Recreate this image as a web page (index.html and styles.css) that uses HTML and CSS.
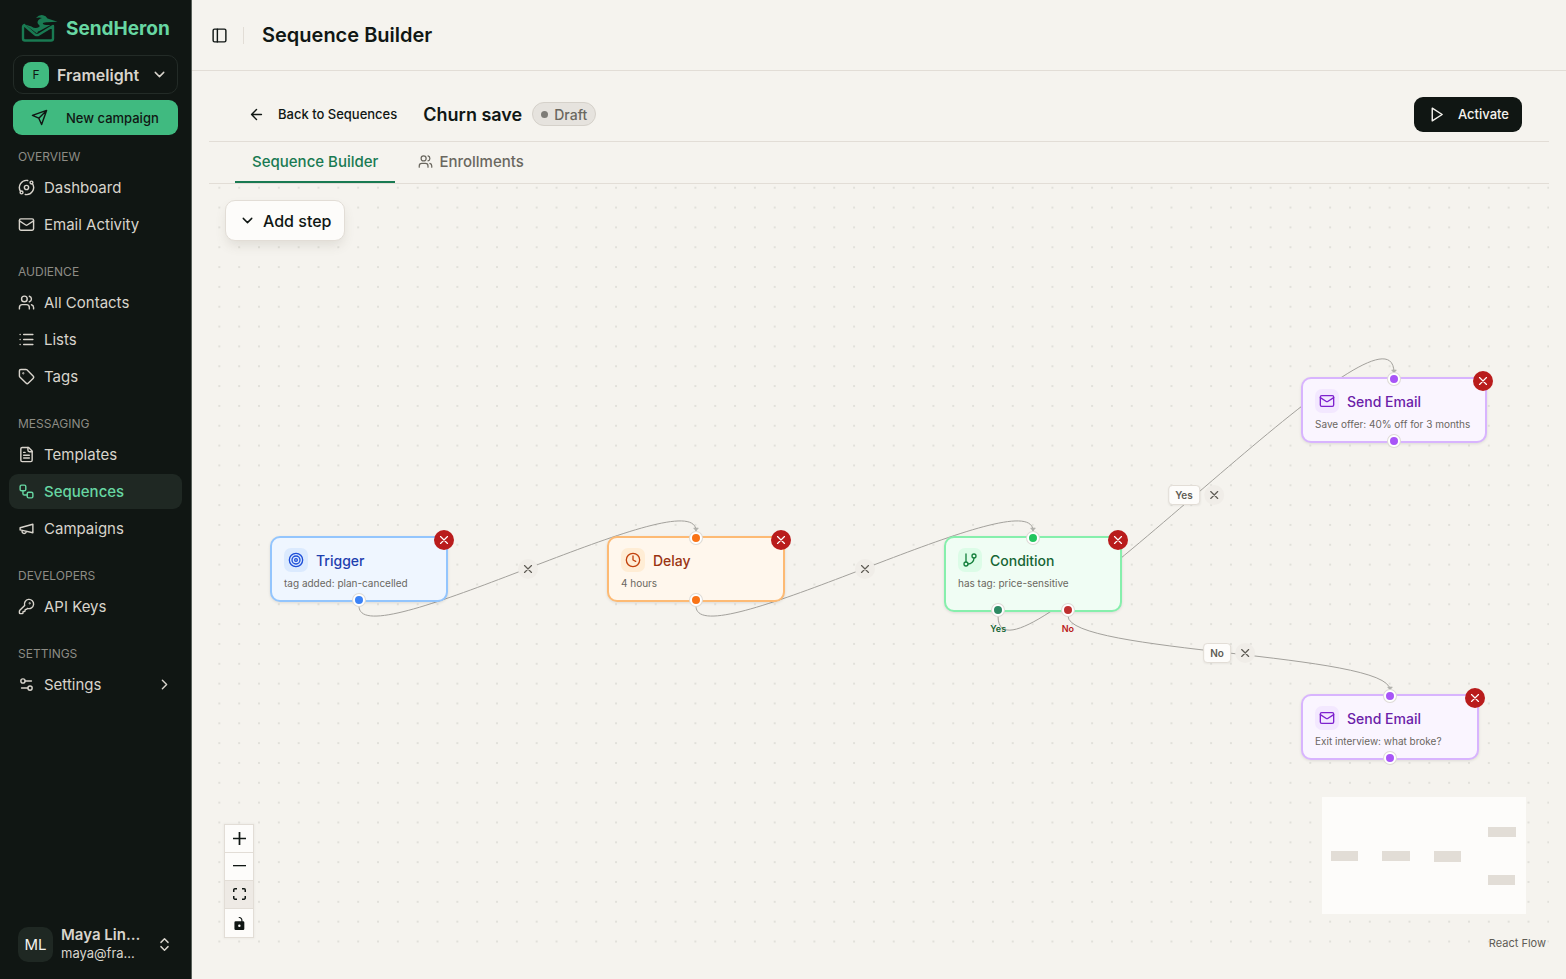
FILE: index.html
```html
<!DOCTYPE html>
<html lang="en">
<head>
<meta charset="utf-8">
<title>Sequence Builder - SendHeron</title>
<link rel="stylesheet" href="styles.css">
</head>
<body>
<svg class="sprite" aria-hidden="true">
  <symbol id="mail" viewBox="0 0 24 24"><rect x="2" y="4" width="20" height="16" rx="2"/><path d="m22 7-8.97 5.7a1.94 1.94 0 0 1-2.06 0L2 7"/></symbol>
  <symbol id="users" viewBox="0 0 24 24"><path d="M16 21v-2a4 4 0 0 0-4-4H6a4 4 0 0 0-4 4v2"/><circle cx="9" cy="7" r="4"/><path d="M22 21v-2a4 4 0 0 0-3-3.87M16 3.13a4 4 0 0 1 0 7.75"/></symbol>
  <symbol id="down" viewBox="0 0 24 24"><path d="m6 9 6 6 6-6"/></symbol>
  <symbol id="x" viewBox="0 0 24 24"><path d="M18 6 6 18M6 6l12 12"/></symbol>
</svg>
<div class="app">
  <aside class="sidebar">
    <a class="brand" href="#">
      <svg class="brand-mark" viewBox="0 0 38 28"><path d="M4 11Q2 11 2 13V24.500Q2 26.500 4 26.500H30Q32 26.500 32 24.500V12L18 20.500Q16 21.800 14 20.500L3.500 11.500" fill="none" stroke="#197a52" stroke-width="2.400" stroke-linejoin="round"/><path d="M4 10.500 10.500 12.500 17 17.500 16 19.500Z" fill="#197a52"/><path d="M15 4Q18 .5 22 1.200Q25 1.700 26.500 4.500L36.500 7.800L26 8.200Q21.500 8 21.800 9.800Q22.500 11.300 29.500 11L23 14.500Q19 17 15.500 18L10.500 13Q15 15 18 13Q19.500 12 17.500 10.500Q15.500 8.500 17.500 6Q19 4.500 21 4Q18 3 15 4Z" fill="#197a52"/></svg>
      <span>SendHeron</span>
    </a>
    <button class="org"><span class="org-badge">F</span><span class="org-name">Framelight</span><svg class="icon"><use href="#down"/></svg></button>
    <button class="new-campaign"><svg class="icon" viewBox="0 0 24 24"><path d="m22 2-7 20-4-9-9-4ZM22 2 11 13"/></svg><span>New campaign</span></button>
    <nav class="nav">
      <section class="group"><h2>OVERVIEW</h2>
        <a href="#"><svg class="icon" viewBox="0 0 24 24"><path d="M20.341 6.484A10 10 0 0 1 10.266 21.850M3.659 17.516A10 10 0 0 1 13.740 2.152"/><circle cx="12" cy="12" r="3"/><circle cx="19" cy="5" r="2"/><circle cx="5" cy="19" r="2"/></svg>Dashboard</a>
        <a href="#"><svg class="icon"><use href="#mail"/></svg>Email Activity</a>
      </section>
      <section class="group"><h2>AUDIENCE</h2>
        <a href="#"><svg class="icon"><use href="#users"/></svg>All Contacts</a>
        <a href="#"><svg class="icon" viewBox="0 0 24 24"><path d="M3 5h.01M3 12h.01M3 19h.01M8 5h13M8 12h13M8 19h13"/></svg>Lists</a>
        <a href="#"><svg class="icon" viewBox="0 0 24 24"><path d="M12.586 2.586A2 2 0 0 0 11.172 2H4a2 2 0 0 0-2 2v7.172a2 2 0 0 0 .586 1.414l8.704 8.704a2.426 2.426 0 0 0 3.420 0l6.580-6.580a2.426 2.426 0 0 0 0-3.420z"/><circle cx="7.500" cy="7.500" r=".5"/></svg>Tags</a>
      </section>
      <section class="group"><h2>MESSAGING</h2>
        <a href="#"><svg class="icon" viewBox="0 0 24 24"><path d="M15 2H6a2 2 0 0 0-2 2v16a2 2 0 0 0 2 2h12a2 2 0 0 0 2-2V7Z"/><path d="M14 2v4a2 2 0 0 0 2 2h4M10 9H8M16 13H8M16 17H8"/></svg>Templates</a>
        <a href="#" class="active" aria-current="page"><svg class="icon" viewBox="0 0 24 24"><rect x="3" y="3" width="8" height="8" rx="2"/><path d="M7 11v4a2 2 0 0 0 2 2h4"/><rect x="13" y="13" width="8" height="8" rx="2"/></svg>Sequences</a>
        <a href="#"><svg class="icon" viewBox="0 0 24 24"><path d="m3 11 18-5v12L3 14v-3zM11.600 16.800a3 3 0 1 1-5.800-1.600"/></svg>Campaigns</a>
      </section>
      <section class="group"><h2>DEVELOPERS</h2>
        <a href="#"><svg class="icon" viewBox="0 0 24 24"><path d="M2.586 17.414A2 2 0 0 0 2 18.828V21a1 1 0 0 0 1 1h3a1 1 0 0 0 1-1v-1a1 1 0 0 1 1-1h1a1 1 0 0 0 1-1v-1a1 1 0 0 1 1-1h.172a2 2 0 0 0 1.414-.586l.814-.814a6.500 6.500 0 1 0-4-4z"/><circle cx="16.500" cy="7.500" r=".5"/></svg>API Keys</a>
      </section>
      <section class="group"><h2>SETTINGS</h2>
        <a href="#"><svg class="icon" viewBox="0 0 24 24"><path d="M14 17H5M19 7h-9"/><circle cx="17" cy="17" r="3"/><circle cx="7" cy="7" r="3"/></svg>Settings<svg class="icon trailing" viewBox="0 0 24 24"><path d="m9 18 6-6-6-6"/></svg></a>
      </section>
    </nav>
    <button class="user"><span class="avatar">ML</span><span class="user-text"><strong>Maya Lin…</strong><span>maya@fra…</span></span><svg class="icon" viewBox="0 0 24 24"><path d="m7 15 5 5 5-5M7 9l5-5 5 5"/></svg></button>
  </aside>

  <main class="main">
    <header class="topbar">
      <button class="bare" aria-label="Toggle sidebar"><svg class="icon" viewBox="0 0 24 24"><rect x="3" y="3" width="18" height="18" rx="2"/><path d="M9 3v18"/></svg></button>
      <span class="divider"></span>
      <h1>Sequence Builder</h1>
    </header>
    <div class="content">
      <div class="builder-bar">
        <a class="back" href="#"><svg class="icon" viewBox="0 0 24 24"><path d="m12 19-7-7 7-7M19 12H5"/></svg>Back to Sequences</a>
        <h2>Churn save</h2>
        <span class="badge">Draft</span>
        <button class="activate"><svg class="icon" viewBox="0 0 24 24"><path d="m6 3 14 9-14 9Z"/></svg>Activate</button>
      </div>
      <div class="tabs" role="tablist">
        <button class="tab selected" role="tab" aria-selected="true">Sequence Builder</button>
        <button class="tab" role="tab" aria-selected="false"><svg class="icon"><use href="#users"/></svg>Enrollments</button>
      </div>
      <div class="canvas">
        <svg class="edges">
          <defs>
            <pattern id="dots" width="20" height="20" patternUnits="userSpaceOnUse" patternTransform="translate(0.400 -6.200) scale(.9918)"><circle cx="10" cy="10" r=".8" fill="#c9c7c1"/></pattern>
            <marker id="arrow" markerWidth="12" markerHeight="12" viewBox="-10 -10 20 20" orient="auto-start-reverse" markerUnits="strokeWidth" refX="0" refY="0"><path d="M-5-4 0 0-5 4Z" fill="#b1b1ad" stroke="#b1b1ad" stroke-linejoin="round"/></marker>
          </defs>
          <rect width="100%" height="100%" fill="url(#dots)"/>
          <g class="lines">
            <path d="M150 422C150 476 487 293 487 347"/>
            <path d="M487 422C487 476 824 293 824 347"/>
            <path d="M789 432C789 529 1185 92 1185 189"/>
            <path d="M859 432C859 469 1181 469 1181 506"/>
          </g>
        </svg>

        <div class="edge-label edge-a"><button aria-label="Remove connection"><svg class="icon"><use href="#x"/></svg></button></div>
        <div class="edge-label edge-b"><button aria-label="Remove connection"><svg class="icon"><use href="#x"/></svg></button></div>
        <div class="edge-label edge-c"><span>Yes</span><button aria-label="Remove connection"><svg class="icon"><use href="#x"/></svg></button></div>
        <div class="edge-label edge-d"><span>No</span><button aria-label="Remove connection"><svg class="icon"><use href="#x"/></svg></button></div>

        <article class="node trigger">
          <div class="node-head"><span class="node-icon"><svg class="icon" viewBox="0 0 24 24"><circle cx="12" cy="12" r="10"/><circle cx="12" cy="12" r="6"/><circle cx="12" cy="12" r="2"/></svg></span><h3>Trigger</h3></div>
          <p>tag added: plan-cancelled</p>
          <button class="remove" aria-label="Delete step"><svg class="icon"><use href="#x"/></svg></button>
          <i class="handle bottom"></i>
        </article>
        <article class="node delay">
          <div class="node-head"><span class="node-icon"><svg class="icon" viewBox="0 0 24 24"><circle cx="12" cy="12" r="10"/><path d="M12 6v6l4 2"/></svg></span><h3>Delay</h3></div>
          <p>4 hours</p>
          <button class="remove" aria-label="Delete step"><svg class="icon"><use href="#x"/></svg></button>
          <i class="handle top"></i><i class="handle bottom"></i>
        </article>
        <article class="node condition">
          <div class="node-head"><span class="node-icon"><svg class="icon" viewBox="0 0 24 24"><path d="M6 3v12"/><circle cx="18" cy="6" r="3"/><circle cx="6" cy="18" r="3"/><path d="M18 9a9 9 0 0 1-9 9"/></svg></span><h3>Condition</h3></div>
          <p>has tag: price-sensitive</p>
          <button class="remove" aria-label="Delete step"><svg class="icon"><use href="#x"/></svg></button>
          <i class="handle top"></i><i class="handle bottom yes"></i><i class="handle bottom no"></i>
          <span class="port yes">Yes</span><span class="port no">No</span>
        </article>
        <article class="node email offer">
          <div class="node-head"><span class="node-icon"><svg class="icon"><use href="#mail"/></svg></span><h3>Send Email</h3></div>
          <p>Save offer: 40% off for 3 months</p>
          <button class="remove" aria-label="Delete step"><svg class="icon"><use href="#x"/></svg></button>
          <i class="handle top"></i><i class="handle bottom"></i>
        </article>
        <article class="node email exit">
          <div class="node-head"><span class="node-icon"><svg class="icon"><use href="#mail"/></svg></span><h3>Send Email</h3></div>
          <p>Exit interview: what broke?</p>
          <button class="remove" aria-label="Delete step"><svg class="icon"><use href="#x"/></svg></button>
          <i class="handle top"></i><i class="handle bottom"></i>
        </article>

        <button class="add-step"><svg class="icon"><use href="#down"/></svg>Add step</button>
        <div class="controls">
          <button aria-label="Zoom in"><svg viewBox="0 0 32 32"><path d="M32 18.133H18.133V32h-4.266V18.133H0v-4.266h13.867V0h4.266v13.867H32z"/></svg></button>
          <button aria-label="Zoom out"><svg viewBox="0 0 32 5"><path d="M0 0h32v3.200H0z"/></svg></button>
          <button class="pressed" aria-label="Fit view"><svg viewBox="0 0 32 30"><path d="M3.692 4.630c0-.53.4-.938.939-.938h5.215V0H4.708C2.130 0 0 2.054 0 4.630v5.216h3.692V4.631zM27.354 0h-5.200v3.692h5.170c.53 0 .984.4.984.939v5.215H32V4.631A4.624 4.624 0 0 0 27.354 0zm.954 24.830c0 .532-.4.940-.939.940h-5.215v3.768h5.215c2.577 0 4.631-2.130 4.631-4.707v-5.139h-3.692v5.139zm-23.677.940a.919.919 0 0 1-.939-.940v-5.138H0v5.139c0 2.577 2.130 4.707 4.708 4.707h5.138V25.770H4.631z"/></svg></button>
          <button aria-label="Toggle interactivity"><svg viewBox="0 0 25 32"><path d="M21.333 10.667H19.810V7.619C19.810 3.429 16.380 0 12.190 0c-4.114 1.828-1.370 2.133.305 2.438 1.676.305 4.420 2.590 4.420 5.181v3.048H3.047A3.056 3.056 0 0 0 0 13.714v15.238A3.056 3.056 0 0 0 3.048 32h18.285a3.056 3.056 0 0 0 3.048-3.048V13.714a3.056 3.056 0 0 0-3.048-3.047zM12.190 24.533a3.056 3.056 0 0 1-3.047-3.047 3.056 3.056 0 0 1 3.047-3.048 3.056 3.056 0 0 1 3.048 3.048 3.056 3.056 0 0 1-3.048 3.047z"/></svg></button>
        </div>
        <svg class="minimap" viewBox="0 0 204 117"><g fill="#e2ddd6"><rect x="9" y="54" width="27" height="10"/><rect x="60" y="54" width="28" height="10"/><rect x="112" y="54" width="27" height="11"/><rect x="166" y="30" width="28" height="10"/><rect x="166" y="78" width="27" height="10"/></g></svg>
        <a class="attribution" href="#">React Flow</a>
      </div>
    </div>
  </main>
</div>
</body>
</html>
```
FILE: styles.css
```css
* { box-sizing: border-box; }
body { margin: 0; font-family: Inter, "Liberation Sans", sans-serif; font-size: 15px; color: #101714; background: #f5f3ee; }
button { font: inherit; color: inherit; border: 0; background: none; padding: 0; cursor: pointer; }
a { color: inherit; text-decoration: none; }
h1, h2, h3, p { margin: 0; }
.sprite { display: none; }
.icon { width: 17px; height: 17px; flex: none; fill: none; stroke: currentColor; stroke-width: 2; stroke-linecap: round; stroke-linejoin: round; }
.app { display: flex; min-height: 100vh; }

.sidebar { width: 192px; flex: none; display: flex; flex-direction: column; padding: 13px 9px 8px; background: #101613; color: #d8d4cc; border-right: 1px solid #59605a; }
.brand { display: flex; align-items: center; gap: 7px; height: 30px; padding-left: 12px; font-size: 19px; font-weight: 700; color: #67d6a2; }
.brand-mark { width: 38px; height: 28px; }
.org { display: flex; align-items: center; gap: 8px; height: 39px; margin: 12px 4px 0; padding: 0 9px; border: 1px solid #232b27; border-radius: 10px; font-size: 16px; font-weight: 600; text-align: left; }
.org-badge { width: 26px; height: 26px; display: grid; place-items: center; border-radius: 8px; background: #40ba80; color: #101613; font-size: 12px; font-weight: 400; }
.org-name { flex: 1; }
.new-campaign { display: flex; align-items: center; height: 35px; margin: 6px 4px 9px; padding: 0 18px; gap: 18px; border-radius: 9px; background: #40ba80; color: #101613; font-size: 13px; font-weight: 500; }
.nav { display: flex; flex-direction: column; gap: 17px; }
.group { display: flex; flex-direction: column; gap: 2px; }
.group h2 { height: 24px; padding: 0 9px; line-height: 26px; font-size: 12px; font-weight: 400; color: #8d8c85; }
.group a { display: flex; align-items: center; gap: 9px; height: 35px; padding: 0 9px; border-radius: 9px; }
.group .active { background: #1f2823; color: #67d6a2; font-weight: 500; }
.trailing { margin-left: auto; }
.user { display: flex; align-items: center; gap: 8px; margin-top: auto; padding: 9px; text-align: left; }
.avatar { width: 35px; height: 35px; display: grid; place-items: center; border-radius: 10px; background: #1f2823; color: #f5f3ee; }
.user-text { flex: 1; display: flex; flex-direction: column; font-size: 13px; line-height: 18px; }
.user-text strong { font-size: 15px; font-weight: 600; }

.main { flex: 1; min-width: 0; display: flex; flex-direction: column; }
.topbar { display: flex; align-items: center; height: 71px; padding: 0 19px; border-bottom: 1px solid #e2ddd6; }
.bare { display: flex; }
.divider { width: 1px; height: 17px; margin: 0 18px 0 15px; background: #e2ddd6; }
.topbar h1 { font-size: 20px; font-weight: 600; }
.content { flex: 1; display: flex; flex-direction: column; padding: 26px 17px; }
.builder-bar { display: flex; align-items: center; height: 45px; padding: 0 27px 10px 39px; border-bottom: 1px solid #e2ddd6; }
.back { display: flex; align-items: center; gap: 13px; font-size: 13px; font-weight: 500; }
.builder-bar h2 { margin: 0 10px 0 26px; font-size: 18px; font-weight: 600; }
.badge { display: flex; align-items: center; gap: 6px; height: 24px; padding: 0 8px; border: 1px solid #d5d1ca; border-radius: 12px; background: #e6e3de; color: #6a675f; font-size: 14px; font-weight: 500; }
.badge::before { content: ""; width: 7px; height: 7px; border-radius: 50%; background: #7e7c77; }
.activate { display: flex; align-items: center; gap: 13px; height: 35px; margin-left: auto; padding: 0 13px 0 14px; border-radius: 9px; background: #101613; color: #f5f3ee; font-size: 13px; font-weight: 500; }
.tabs { display: flex; gap: 6px; height: 42px; padding-left: 26px; border-bottom: 1px solid #e2ddd6; }
.tab { display: flex; align-items: center; gap: 6px; padding: 0 17px; font-weight: 500; color: #6a675f; border-bottom: 2px solid transparent; }
.tab .icon { width: 15px; height: 15px; }
.tab.selected { color: #197a52; border-color: #197a52; }

.canvas { position: relative; flex: 1; overflow: hidden; }
.edges { position: absolute; inset: 0; width: 100%; height: 100%; }
.lines path { fill: none; stroke: #a3a19c; stroke-width: 1; marker-end: url(#arrow); }
.edge-label { position: absolute; display: flex; align-items: center; gap: 4px; transform: translate(-50%, -50%); }
.edge-label span { height: 20px; padding: 0 6px; border: 1px solid #e2ddd6; border-radius: 4px; background: #fdfcfa; color: #5f5c55; font-size: 10px; font-weight: 600; line-height: 18px; box-shadow: 0 1px 2px #0000000d; }
.edge-label button { width: 20px; height: 20px; display: grid; place-items: center; border-radius: 50%; background: #f0ede8; color: #5f5c55; }
.edge-label .icon { width: 14px; height: 14px; }
.edge-a { left: 319px; top: 385px; }
.edge-b { left: 656px; top: 385px; }
.edge-c { left: 987px; top: 311px; }
.edge-d { left: 1020px; top: 469px; }

.node { position: absolute; min-width: 178px; height: 66px; padding: 10px 12px; border: 2px solid; border-radius: 10px; box-shadow: 0 1px 3px #0000001a; white-space: nowrap; }
.node-head { display: flex; align-items: center; gap: 8px; }
.node-icon { width: 24px; height: 24px; display: grid; place-items: center; border-radius: 7px; }
.node-icon .icon { width: 16px; height: 16px; }
.node h3 { font-size: 14px; font-weight: 500; }
.node p { margin-top: 4px; font-size: 10px; line-height: 14px; color: #6a675f; }
.remove { position: absolute; right: -8px; top: -8px; width: 20px; height: 20px; display: grid; place-items: center; border-radius: 50%; background: #b91c1c; color: #fff; }
.remove .icon { width: 14px; height: 14px; }
.handle { position: absolute; left: 50%; width: 12px; height: 12px; border: 2px solid #fff; border-radius: 50%; transform: translateX(-50%); box-shadow: 0 0 0 1px #dedbd6; }
.handle.top { top: -6px; }
.handle.bottom { bottom: -6px; }
.trigger { left: 61px; top: 352px; background: #eff6ff; border-color: #93c5fd; }
.trigger h3 { color: #1e40af; }
.trigger .node-icon { background: #dbeafe; color: #1d4ed8; }
.trigger .handle { background: #3b82f6; }
.delay { left: 398px; top: 352px; background: #fff7ed; border-color: #fdba74; }
.delay h3 { color: #9a3412; }
.delay .node-icon { background: #ffedd5; color: #c2410c; }
.delay .handle { background: #f97316; }
.condition { left: 735px; top: 352px; height: 76px; background: #f0fdf4; border-color: #86efac; }
.condition h3 { color: #166534; }
.condition .node-icon { background: #dcfce7; color: #15803d; }
.condition .handle { background: #22c55e; }
.condition .handle.yes { left: 30%; background: #2d8a63; }
.condition .handle.no { left: 70%; background: #bf3030; }
.port { position: absolute; top: 85px; transform: translateX(-50%); font-size: 9px; font-weight: 600; line-height: 12px; }
.port.yes { left: 30%; color: #166534; }
.port.no { left: 70%; color: #b91c1c; }
.email { background: #faf5ff; border-color: #d8b4fe; }
.email h3 { color: #6b21a8; }
.email .node-icon { background: #f3e8ff; color: #7e22ce; }
.email .handle { background: #a855f7; }
.offer { left: 1092px; top: 193px; min-width: 186px; }
.exit { left: 1092px; top: 510px; }

.add-step { position: absolute; left: 16px; top: 16px; display: flex; align-items: center; gap: 7px; height: 41px; padding: 0 13px; border: 1px solid #e2ddd6; border-radius: 10px; background: #fdfcfa; font-size: 16px; font-weight: 500; box-shadow: 0 6px 12px -2px #5c544826; }
.controls { position: absolute; left: 15px; bottom: 15px; width: 30px; display: flex; flex-direction: column; border: 1px solid #e2ddd6; box-shadow: 0 0 2px 1px #00000008; }
.controls button { height: 28px; display: grid; place-items: center; background: #fdfcfa; border-bottom: 1px solid #e2ddd6; }
.controls button:last-child { border-bottom: 0; }
.controls .pressed { background: #eeeae5; }
.controls svg { width: 13px; max-height: 13px; fill: #101613; }
.minimap { position: absolute; right: 23px; bottom: 39px; width: 204px; height: 117px; background: #fdfcfa; }
.attribution { position: absolute; right: 3px; bottom: 2px; font-size: 11px; line-height: 15px; color: #5f5c55; }
```
